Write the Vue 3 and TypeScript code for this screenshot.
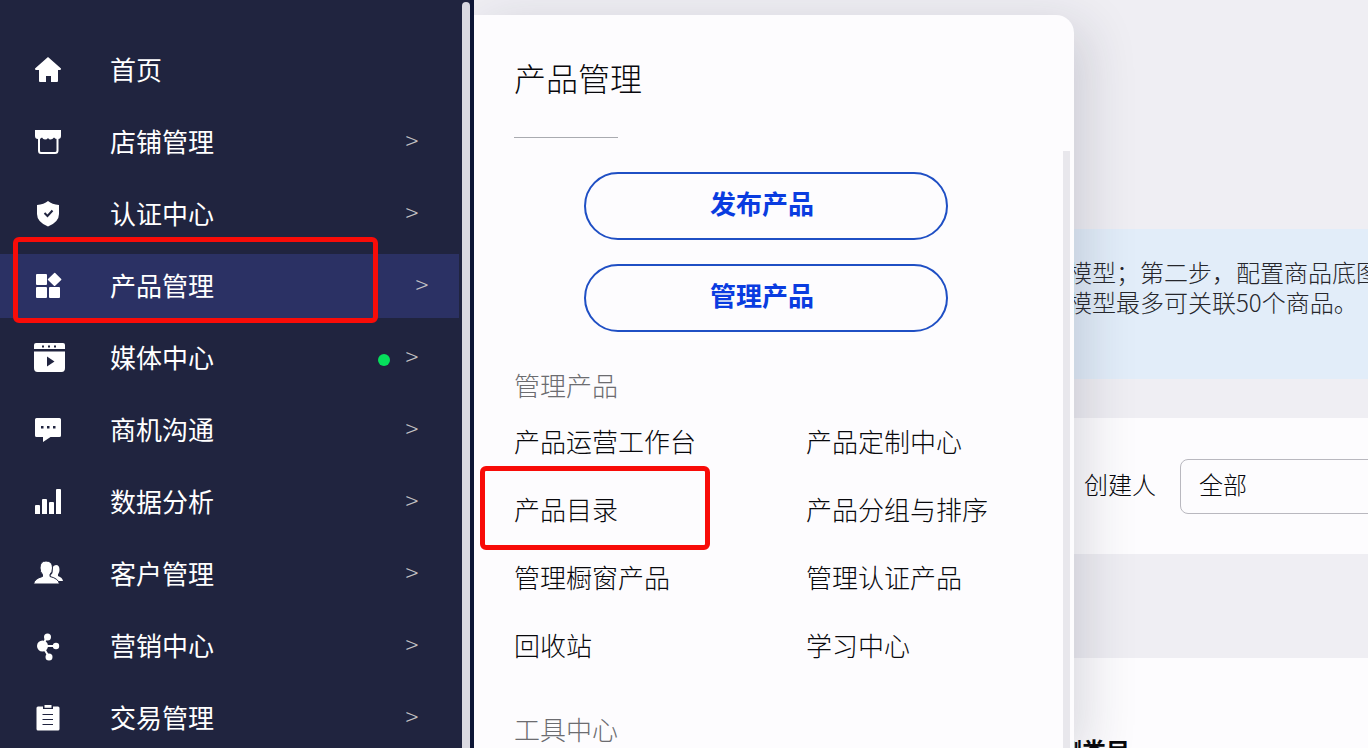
<script setup lang="ts">
interface NavItem {
  label: string
  icon: string
  arrow: boolean
  active?: boolean
  dot?: boolean
}

const navItems: NavItem[] = [
  { label: '首页', icon: 'home', arrow: false },
  { label: '店铺管理', icon: 'shop', arrow: true },
  { label: '认证中心', icon: 'shield', arrow: true },
  { label: '产品管理', icon: 'grid', arrow: true, active: true },
  { label: '媒体中心', icon: 'media', arrow: true, dot: true },
  { label: '商机沟通', icon: 'chat', arrow: true },
  { label: '数据分析', icon: 'bars', arrow: true },
  { label: '客户管理', icon: 'users', arrow: true },
  { label: '营销中心', icon: 'share', arrow: true },
  { label: '交易管理', icon: 'clipboard', arrow: true },
]

const actions: string[] = ['发布产品', '管理产品']

const links: { label: string; marked?: boolean }[] = [
  { label: '产品运营工作台' },
  { label: '产品定制中心' },
  { label: '产品目录', marked: true },
  { label: '产品分组与排序' },
  { label: '管理橱窗产品' },
  { label: '管理认证产品' },
  { label: '回收站' },
  { label: '学习中心' },
]
</script>

<template>
  <div class="layout">
    <aside class="sidebar">
      <nav class="nav">
        <a
          v-for="item in navItems"
          :key="item.label"
          href="#"
          class="nav-item"
          :class="{ active: item.active }"
        >
          <svg class="icon" viewBox="0 0 32 32" aria-hidden="true">
            <path v-if="item.icon === 'home'" d="M16 3 L29 14.500 Q29 16 28 16 H26 V27 Q26 28 25 28 H19 V22 H14 V28 H8 Q7 28 7 27 V16 H4 Q3 16 3 14.500 Z" />
            <g v-else-if="item.icon === 'shop'">
              <path d="M3 4 H29 V10 Q29 13 26 13 Q23 13 22 11.500 Q20.500 13.500 18.500 13.500 Q17 13.500 16 12 Q15 13.500 13 13.500 Q11 13.500 10 11.500 Q8.500 13 6 13 Q3 13 3 10 Z" />
              <path class="line" d="M7 12 V24.500 Q7 27 9 27 H23 Q25.500 27 25.500 24.500 V12" />
            </g>
            <g v-else-if="item.icon === 'shield'">
              <path d="M16 3 Q20 6.500 27 7 V16 Q27 24 16 28.500 Q5 24 5 16 V7 Q12 6.500 16 3 Z" />
              <path class="cut" d="M12.500 15 L15.500 18 L20.500 12.500" />
            </g>
            <g v-else-if="item.icon === 'grid'">
              <rect x="4" y="4" width="11" height="11" rx="1" />
              <rect x="4" y="17" width="11" height="11" rx="1" />
              <rect x="17" y="17" width="11" height="11" rx="1" />
              <path d="M22.200 3 Q22.700 2.500 23.200 3 L29.200 9 Q29.700 9.500 29.200 10.100 L23.200 15.700 Q22.500 16.200 21.900 15.700 L16 10 Q15.500 9.500 16 9 Z" />
            </g>
            <g v-else-if="item.icon === 'media'">
              <path d="M2 7 V3 Q2 1 4 1 H31 Q33 1 33 3 V7 Z" />
              <path d="M2 9.500 H33 V26 Q33 30 29.500 30 H5.500 Q2 30 2 26 Z" />
              <path class="hole" d="M15 14.500 L22.500 19.500 L15 24.500 Z M10 3.500 H12 V5.500 H10 Z M16 3.500 H18 V5.500 H16 Z M22 3.500 H24 V5.500 H22 Z" />
            </g>
            <g v-else-if="item.icon === 'chat'">
              <path d="M4.500 4 H27.500 Q29 4 29 5.500 V21.500 Q29 23 27.500 23 H18.500 L11 28 V23 H4.500 Q3 23 3 21.500 V5.500 Q3 4 4.500 4 Z" />
              <path class="hole" d="M9 12 H11.500 V14.500 H9 Z M15 12 H17.500 V14.500 H15 Z M21 12 H23.500 V14.500 H21 Z" />
            </g>
            <path v-else-if="item.icon === 'bars'" d="M3 20 Q3 19 4 19 H7 Q8 19 8 20 V28 H3 Z M10 14 Q10 13 11 13 H14 Q15 13 15 14 V28 H10 Z M17 17 Q17 16 18 16 H21 Q22 16 22 17 V28 H17 Z M24 4 Q24 3 25 3 H28 Q29 3 29 4 V28 H24 Z" />
            <g v-else-if="item.icon === 'users'">
              <path d="M24 7 Q27.500 7 27.500 12 Q27.500 14.500 26 16.500 V18 Q30.500 19.500 31 23 H22 L18 18 L20.500 15 V9.500 Q21.500 7 24 7 Z" />
              <path class="outlined" d="M14 3 Q20.500 3 20.500 10 Q20.500 14 18 16.500 V18.500 Q26.500 20.500 27.500 26 H1.500 Q2.500 20.500 10.500 18.500 V16.500 Q8 14 8 10 Q8 3 14 3 Z" />
            </g>
            <g v-else-if="item.icon === 'share'">
              <path class="line" d="M10.500 16 L15 6.500 M10.500 16 H23 M10.500 16 L17 27" />
              <circle cx="10.500" cy="16" r="5.500" />
              <circle cx="15.500" cy="7" r="3.500" />
              <circle cx="24" cy="16" r="3.200" />
              <circle cx="17" cy="27" r="3.500" />
            </g>
            <g v-else>
              <path d="M6 4.500 H11 V7 H21 V4.500 H26 Q27.500 4.500 27.500 6 V27 Q27.500 28.500 26 28.500 H6 Q4.500 28.500 4.500 27 V6 Q4.500 4.500 6 4.500 Z" />
              <path d="M12.500 3 H19.500 V5.800 H12.500 Z" />
              <path class="thin-cut" d="M10.500 12.500 H21 M10.500 17.500 H21 M10.500 22.500 H21" />
            </g>
          </svg>
          <span class="nav-label">{{ item.label }}</span>
          <span v-if="item.dot" class="dot"></span>
          <span v-if="item.arrow" class="arrow">&gt;</span>
          <span v-if="item.active" class="mark nav-mark"></span>
        </a>
      </nav>
      <div class="sidebar-scroll"></div>
    </aside>

    <main class="content">
      <div class="notice">
        <p>模型；第二步，配置商品底图</p>
        <p>模型最多可关联50个商品。</p>
      </div>
      <form class="filter">
        <label for="creator">创建人</label>
        <select id="creator">
          <option>全部</option>
        </select>
      </form>
      <section class="list">
        <h3>测类目</h3>
      </section>

      <section class="panel">
        <h1>产品管理</h1>
        <div class="panel-body">
          <div class="panel-main">
            <div class="actions">
              <button v-for="action in actions" :key="action" type="button">{{ action }}</button>
            </div>
            <h2>管理产品</h2>
            <div class="links">
              <div v-for="link in links" :key="link.label" class="link-cell">
                <a href="#">{{ link.label }}</a>
                <span v-if="link.marked" class="mark link-mark"></span>
              </div>
            </div>
            <h2 class="tools">工具中心</h2>
          </div>
          <div class="panel-scroll"></div>
        </div>
      </section>
    </main>
  </div>
</template>

<style>
body {
  margin: 0;
  overflow: hidden;
}
</style>

<style scoped>
.layout {
  display: flex;
  height: 100vh;
  overflow: hidden;
  background: #efeef3;
  color: #08080c;
  font-family: "Noto Sans CJK SC", sans-serif;
  font-weight: 300;
}
.layout * {
  box-sizing: border-box;
}
a {
  color: inherit;
  text-decoration: none;
}
h1, h2, h3, p {
  margin: 0;
  font-weight: 300;
}
.mark {
  position: absolute;
  border: 5px solid #f80c08;
  border-radius: 6px;
  pointer-events: none;
}

.sidebar {
  display: flex;
  flex: none;
  width: 474px;
  padding-right: 4px;
  background: #20243f;
  box-shadow: inset -4px 0 #0d1636;
}
.nav {
  display: flex;
  flex: 1;
  flex-direction: column;
  gap: 8px;
  padding-top: 38px;
  margin-right: 3px;
}
.nav-item {
  position: relative;
  display: flex;
  flex: none;
  align-items: center;
  height: 64px;
  padding: 0 40px 0 32px;
  color: #fff;
  font-size: 26px;
  font-weight: 400;
}
.nav-item.active {
  padding-right: 30px;
  background: #2b3164;
}
.icon {
  width: 32px;
  height: 32px;
  margin-right: 46px;
  overflow: visible;
  fill: #fff;
}
.icon .line {
  fill: none;
  stroke: #fff;
  stroke-width: 2;
}
.icon .cut {
  fill: none;
  stroke: #20243f;
  stroke-width: 2;
}
.icon .thin-cut {
  fill: none;
  stroke: #20243f;
  stroke-width: 1;
}
.icon .hole {
  fill: #20243f;
}
.icon .outlined {
  stroke: #20243f;
  stroke-width: 1;
}
.nav-label {
  flex: 1;
  padding-bottom: 4px;
}
.dot {
  width: 12px;
  height: 12px;
  margin: 4px 15px 0 0;
  border-radius: 50%;
  background: #06df5c;
}
.arrow {
  width: 14px;
  padding-bottom: 5px;
  color: #c4c2c4;
  font-size: 24px;
  font-weight: 300;
  text-align: center;
}
.nav-mark {
  inset: -17px 81px -5px 13px;
}
.sidebar-scroll {
  flex: none;
  width: 8px;
  margin-top: 2px;
  border-radius: 4px 4px 0 0;
  background: #dad9e1;
}

.content {
  position: relative;
  display: flex;
  flex: 1;
  flex-direction: column;
  min-width: 0;
  padding-top: 229px;
}
.notice {
  flex: none;
  height: 150px;
  padding: 28px 0 0 594px;
  overflow: hidden;
  background: #e2edf9;
  color: #26272c;
  font-size: 24px;
  line-height: 30px;
  white-space: nowrap;
}
.filter {
  display: flex;
  flex: none;
  gap: 24px;
  height: 136px;
  margin-top: 39px;
  padding: 41px 0 0 610px;
  overflow: hidden;
  background: #fdfcfe;
  font-size: 24px;
}
.filter label {
  flex: none;
  line-height: 50px;
}
.filter select {
  flex: none;
  width: 320px;
  height: 55px;
  padding: 0 0 6px 18px;
  border: 1px solid #b9b8bf;
  border-radius: 8px;
  appearance: none;
  background: #fdfcfe;
  color: inherit;
  font: inherit;
}
.list {
  flex: 1;
  margin-top: 104px;
  padding: 74px 0 0 584px;
  overflow: hidden;
  background: #fdfcfe;
}
.list h3 {
  font-size: 24px;
  font-weight: 700;
  line-height: 36px;
}

.panel {
  position: absolute;
  top: 15px;
  bottom: 0;
  left: 0;
  display: flex;
  flex-direction: column;
  width: 600px;
  border-radius: 0 18px 0 0;
  background: #fdfcfe;
  box-shadow: 12px 12px 52px rgba(30, 40, 60, 0.16);
  clip-path: inset(-15px -100px 0 0);
}
.panel h1 {
  flex: none;
  width: max-content;
  margin-left: 40px;
  padding-top: 38px;
  font-size: 32px;
  line-height: 48px;
}
.panel h1::after {
  display: block;
  width: 104px;
  height: 1px;
  margin-top: 36px;
  background: #a9abb0;
  content: "";
}
.panel-body {
  display: flex;
  flex: 1;
  min-height: 0;
  margin-top: 13px;
}
.panel-main {
  flex: 1;
  padding: 21px 0 0 40px;
}
.actions {
  display: flex;
  flex-direction: column;
  gap: 24px;
  margin: 0 115px 0 70px;
}
.actions button {
  height: 68px;
  padding: 0 8px 8px 0;
  border: 2px solid #1f4fc4;
  border-radius: 34px;
  background: #fdfcfe;
  color: #0a3ce0;
  font: inherit;
  font-size: 26px;
  font-weight: 700;
}
.panel h2 {
  margin-top: 33px;
  color: #6c6c70;
  font-size: 26px;
  line-height: 40px;
}
.links {
  display: grid;
  grid-template-columns: 292px 1fr;
  margin-top: 2px;
  font-size: 26px;
  line-height: 68px;
}
.link-cell {
  position: relative;
  white-space: nowrap;
}
.link-mark {
  inset: -9px 96px -7px -34px;
}
.panel h2.tools {
  margin-top: 30px;
}
.panel-scroll {
  flex: none;
  width: 7px;
  margin-right: 4px;
  background: #e8e7ec;
}
</style>
